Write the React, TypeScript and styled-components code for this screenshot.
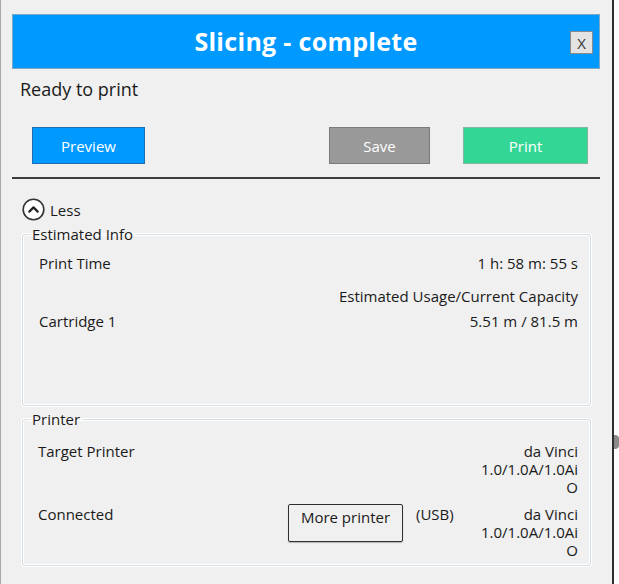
import React from 'react';
import styled, { createGlobalStyle } from 'styled-components';

const GlobalStyle = createGlobalStyle`
  html, body {
    margin: 0;
    padding: 0;
    background: #ffffff;
  }
  body {
    font-family: "Open Sans", "Noto Sans", "Liberation Sans", sans-serif;
    color: #1a1a1a;
  }
`;

const Page = styled.div`
  width: 619px;
  height: 584px;
  display: flex;
  overflow: hidden;
`;

const Window = styled.div`
  width: 614px;
  height: 584px;
  box-sizing: border-box;
  background: #f0f0f0;
  border-left: 1px solid #a8a8a8;
  border-right: 2px solid #2e2e2e;
  padding: 14px 12px 0 11px;
  display: flex;
  flex-direction: column;
`;

const TitleBar = styled.div`
  height: 55px;
  background: #0099ff;
  border: 1px solid #7fa7c8;
  box-sizing: border-box;
  display: flex;
  align-items: center;
  justify-content: center;
  position: relative;
`;

const Title = styled.h1`
  margin: 0 0 1px;
  font-size: 25px;
  font-weight: 700;
  color: #ffffff;
  letter-spacing: 0.3px;
`;

const CloseButton = styled.button`
  position: absolute;
  right: 6px;
  top: 16px;
  width: 23px;
  height: 23px;
  padding: 0;
  background: #e3e3e3;
  border: 1px solid #8a8a8a;
  font-family: "Open Sans", sans-serif;
  font-size: 15px;
  color: #333;
  display: flex;
  align-items: center;
  justify-content: center;
`;

const Status = styled.div`
  font-size: 18px;
  padding: 8px 0 0 8px;
  height: 30px;
`;

const ActionBar = styled.div`
  display: flex;
  align-items: center;
  padding: 20px 12px 13px 20px;
  border-bottom: 2px solid #3c3c3c;
`;

const ActionButton = styled.button<{ $bg: string; $border: string; $width: number }>`
  width: ${p => p.$width}px;
  height: 37px;
  background: ${p => p.$bg};
  border: 1px solid ${p => p.$border};
  color: #ffffff;
  font-family: "Open Sans", sans-serif;
  font-size: 15px;
  padding: 0;
`;

const Spacer = styled.div`
  flex: 1;
`;

const Gap = styled.div<{ $w: number }>`
  width: ${p => p.$w}px;
`;

const Toggle = styled.div`
  display: flex;
  align-items: center;
  gap: 5px;
  margin: 19px 0 0 10px;
  font-size: 15px;
`;

const Body = styled.div`
  padding: 3px 9px 0 10px;
  display: flex;
  flex-direction: column;
  gap: 3px;
`;

const Group = styled.fieldset<{ $height: number }>`
  margin: 0;
  height: ${p => p.$height}px;
  box-sizing: border-box;
  border: 1px solid #d6dee6;
  border-radius: 3px;
  box-shadow: inset 0 0 0 1px #ffffff, 0 0 0 1px #ffffff;
  padding: 6px 12px 0 16px;
`;

const Legend = styled.legend`
  font-size: 15px;
  padding: 0 3px 0 1px;
  margin-left: -8px;
`;

const InfoRow = styled.div<{ $top: number }>`
  display: flex;
  justify-content: space-between;
  align-items: flex-start;
  font-size: 15px;
  margin-top: ${p => p.$top}px;
  line-height: 20px;
`;

const Label = styled.span`
  flex: 1;
`;

const Value = styled.span`
  text-align: right;
`;

const PrinterRow = styled.div<{ $top: number }>`
  display: grid;
  grid-template-columns: 1fr 115px 78px 97px;
  align-items: start;
  font-size: 15px;
  line-height: 18px;
  margin-top: ${p => p.$top}px;
  margin-left: -1px;
`;

const PrinterValue = styled.div`
  text-align: right;
  white-space: nowrap;
`;

const MoreButton = styled.button`
  width: 115px;
  height: 38px;
  background: #f0f0f0;
  border: 1px solid #2f2f2f;
  border-radius: 2px;
  box-shadow: 0 1px 1px rgba(0, 0, 0, 0.25);
  font-family: "Open Sans", sans-serif;
  font-size: 15px;
  color: #1a1a1a;
  padding: 2px 0 0;
  display: flex;
  justify-content: center;
  align-items: flex-start;
  margin-top: -1px;
`;

const Usb = styled.span`
  padding-left: 13px;
`;

const Outside = styled.div`
  flex: 1;
  position: relative;
`;

const Handle = styled.div`
  position: absolute;
  left: 0;
  top: 435px;
  width: 5px;
  height: 14px;
  background: #8a8a8a;
  border-radius: 0 4px 4px 0;
`;

const ChevronCircle = () => (
  <svg width="23" height="23" viewBox="0 0 23 23">
    <circle cx="11.5" cy="11.5" r="10.3" fill="#fff" stroke="#333" strokeWidth="1.6" />
    <path d="M7.3 13.6 L11.5 9.4 L15.7 13.6" fill="none" stroke="#222" strokeWidth="2.2" strokeLinecap="round" strokeLinejoin="round" />
  </svg>
);

const PrinterName = () => (
  <PrinterValue>
    da Vinci<br />1.0/1.0A/1.0Ai<br />O
  </PrinterValue>
);

const App: React.FC = () => {
  return (
    <Page>
      <GlobalStyle />
      <Window>
        <TitleBar>
          <Title>Slicing - complete</Title>
          <CloseButton>X</CloseButton>
        </TitleBar>
        <Status>Ready to print</Status>
        <ActionBar>
          <ActionButton $bg="#0099ff" $border="#1b6fb0" $width={113}>Preview</ActionButton>
          <Spacer />
          <ActionButton $bg="#999999" $border="#7a7a7a" $width={101}>Save</ActionButton>
          <Gap $w={33} />
          <ActionButton $bg="#33d695" $border="#7fb89e" $width={125}>Print</ActionButton>
        </ActionBar>
        <Toggle>
          <ChevronCircle />
          <span>Less</span>
        </Toggle>
        <Body>
          <Group $height={182}>
            <Legend>Estimated Info</Legend>
            <InfoRow $top={3}>
              <Label>Print Time</Label>
              <Value>1 h: 58 m: 55 s</Value>
            </InfoRow>
            <InfoRow $top={13}>
              <Label />
              <Value>Estimated Usage/Current Capacity</Value>
            </InfoRow>
            <InfoRow $top={5}>
              <Label>Cartridge 1</Label>
              <Value>5.51 m / 81.5 m</Value>
            </InfoRow>
          </Group>
          <Group $height={157}>
            <Legend>Printer</Legend>
            <PrinterRow $top={7}>
              <span>Target Printer</span>
              <span />
              <span />
              <PrinterName />
            </PrinterRow>
            <PrinterRow $top={9}>
              <span>Connected</span>
              <MoreButton>More printer</MoreButton>
              <Usb>(USB)</Usb>
              <PrinterName />
            </PrinterRow>
          </Group>
        </Body>
      </Window>
      <Outside>
        <Handle />
      </Outside>
    </Page>
  );
};

export default App;
